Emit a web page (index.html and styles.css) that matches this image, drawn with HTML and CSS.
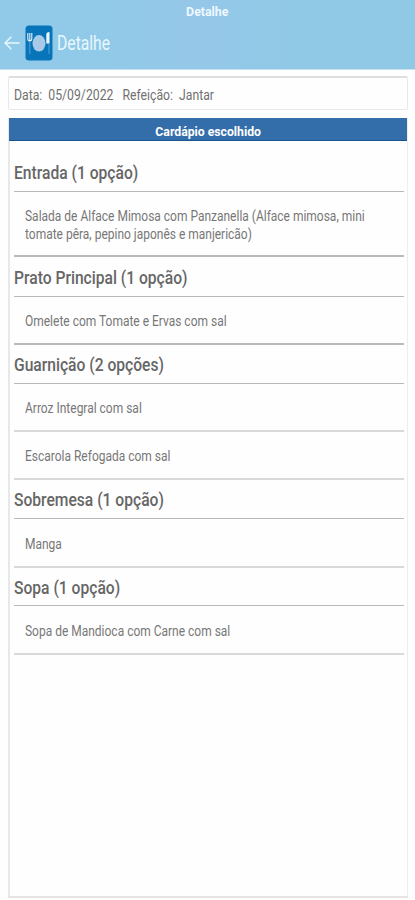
FILE: index.html
```html
<!DOCTYPE html>
<html lang="pt-BR">
<head>
<meta charset="utf-8">
<title>Detalhe</title>
<link rel="stylesheet" href="styles.css">
</head>
<body>
<header class="topbar">
  <div class="status"><span class="t">Detalhe</span></div>
  <div class="nav">
    <svg class="back" width="16" height="16" viewBox="0 0 16 16"><path d="M15.5 8H1.2M7.3 1.8L1 8l6.3 6.2" fill="none" stroke="#e8f7fd" stroke-width="1.5"/></svg>
    <svg class="logo" width="28" height="36" viewBox="0 0 28 36">
      <rect x=".5" y=".5" width="27" height="35" rx="3.5" fill="#0874b9"/>
      <ellipse cx="14" cy="18.3" rx="6.5" ry="8.3" fill="#a9c9e9"/>
      <path d="M2.8 8v5.5q0 2.5 2 2.5t2-2.5V8M4.800 8v8" fill="none" stroke="#e4f3fc" stroke-width="1.1"/>
      <path d="M4.800 16v13" stroke="#6aaede" stroke-width=".8"/>
      <path d="M21.300 18.500V9q.3-2 3.200-2v11.500z" fill="#edf8fd"/>
      <path d="M24 19v10" stroke="#6aaede" stroke-width=".8"/>
    </svg>
    <h1><span class="t">Detalhe</span></h1>
  </div>
</header>
<main>
  <div class="info"><span class="t">Data:&nbsp; 05/09/2022 &nbsp; Refeição:&nbsp; Jantar</span></div>
  <section class="card">
    <div class="title"><span class="t">Cardápio escolhido</span></div>
    <div class="list">
      <h2 class="first"><span class="t">Entrada (1 opção)</span></h2>
      <p class="tall dark"><span class="t">Salada de Alface Mimosa com Panzanella (Alface mimosa, mini<br>tomate pêra, pepino japonês e manjericão)</span></p>
      <h2 class="h40"><span class="t">Prato Principal (1 opção)</span></h2>
      <p class="dark"><span class="t">Omelete com Tomate e Ervas com sal</span></p>
      <h2><span class="t">Guarnição (2 opções)</span></h2>
      <p><span class="t">Arroz Integral com sal</span></p>
      <p><span class="t">Escarola Refogada com sal</span></p>
      <h2><span class="t">Sobremesa (1 opção)</span></h2>
      <p class="h49"><span class="t">Manga</span></p>
      <h2 class="h38"><span class="t">Sopa (1 opção)</span></h2>
      <p class="h49"><span class="t">Sopa de Mandioca com Carne com sal</span></p>
    </div>
  </section>
</main>
</body>
</html>
```
FILE: styles.css
```css
* { box-sizing: border-box; margin: 0; padding: 0; }
body { width: 415px; height: 900px; overflow: hidden; background: #fefefe; font-family: Roboto, "Liberation Sans", sans-serif; color: #777; }
.t { display: inline-block; transform-origin: 0 50%; white-space: nowrap; }
.topbar { height: 70px; background: linear-gradient(90deg, #91cae8 25%, #95c7e8 48%, #8fc9e6 72%); border-bottom: 1px solid #c5e2f2; }
.status { height: 22px; text-align: center; font-size: 13px; line-height: 23px; font-weight: 700; color: #eef8fe; }
.status .t { transform: scaleX(.95); transform-origin: 50% 50%; }
.nav { display: flex; align-items: center; height: 41px; padding-left: 4px; }
.logo { margin-left: 5px; }
h1 { margin-left: 4px; font-size: 20px; line-height: 40px; font-weight: 400; color: #e8f7fd; }
h1 .t { transform: scaleX(.785); }
main { padding: 6px 7px 0 8px; }
.info { height: 34px; border: 1px solid #e8e8e8; border-top: 2px solid #e0dddd; border-radius: 2px; padding-left: 5px; font-size: 14px; line-height: 34px; margin-bottom: 8px; color: #707070; }
.info .t { transform: scaleX(.873); }
.card { height: 780px; border: 1px solid #ededed; border-left: 2px solid #e8e8e8; border-bottom: 2px solid #e4e4e4; border-top: 0; }
.title { height: 23px; margin-left: -1px; background: #346eaa; border-bottom: 1px solid #175590; text-align: center; color: #fff; font-weight: 700; font-size: 13px; line-height: 27px; }
.title .t { transform: scaleX(.94); transform-origin: 50% 50%; }
.list { padding: 0 3px 0 4px; }
h2 { height: 39px; border-bottom: 1px solid #b8b8b8; font-size: 18px; font-weight: 500; line-height: 40px; color: #666; }
h2.first { height: 51px; line-height: 63px; }
h2.h40 { height: 40px; line-height: 41px; }
h2.h38 { height: 38px; }
h2 .t { transform: scaleX(.868); }
p { display: flex; align-items: center; height: 48px; padding: 2px 0 0 10.5px; border-bottom: 2px solid #d9d9d9; font-size: 14px; line-height: 18px; }
p.tall { height: 65px; padding-top: 2px; }
p.dark { border-bottom-color: #bababa; }
p.h49 { height: 49px; }
p .t { transform: scaleX(.856); }
```
